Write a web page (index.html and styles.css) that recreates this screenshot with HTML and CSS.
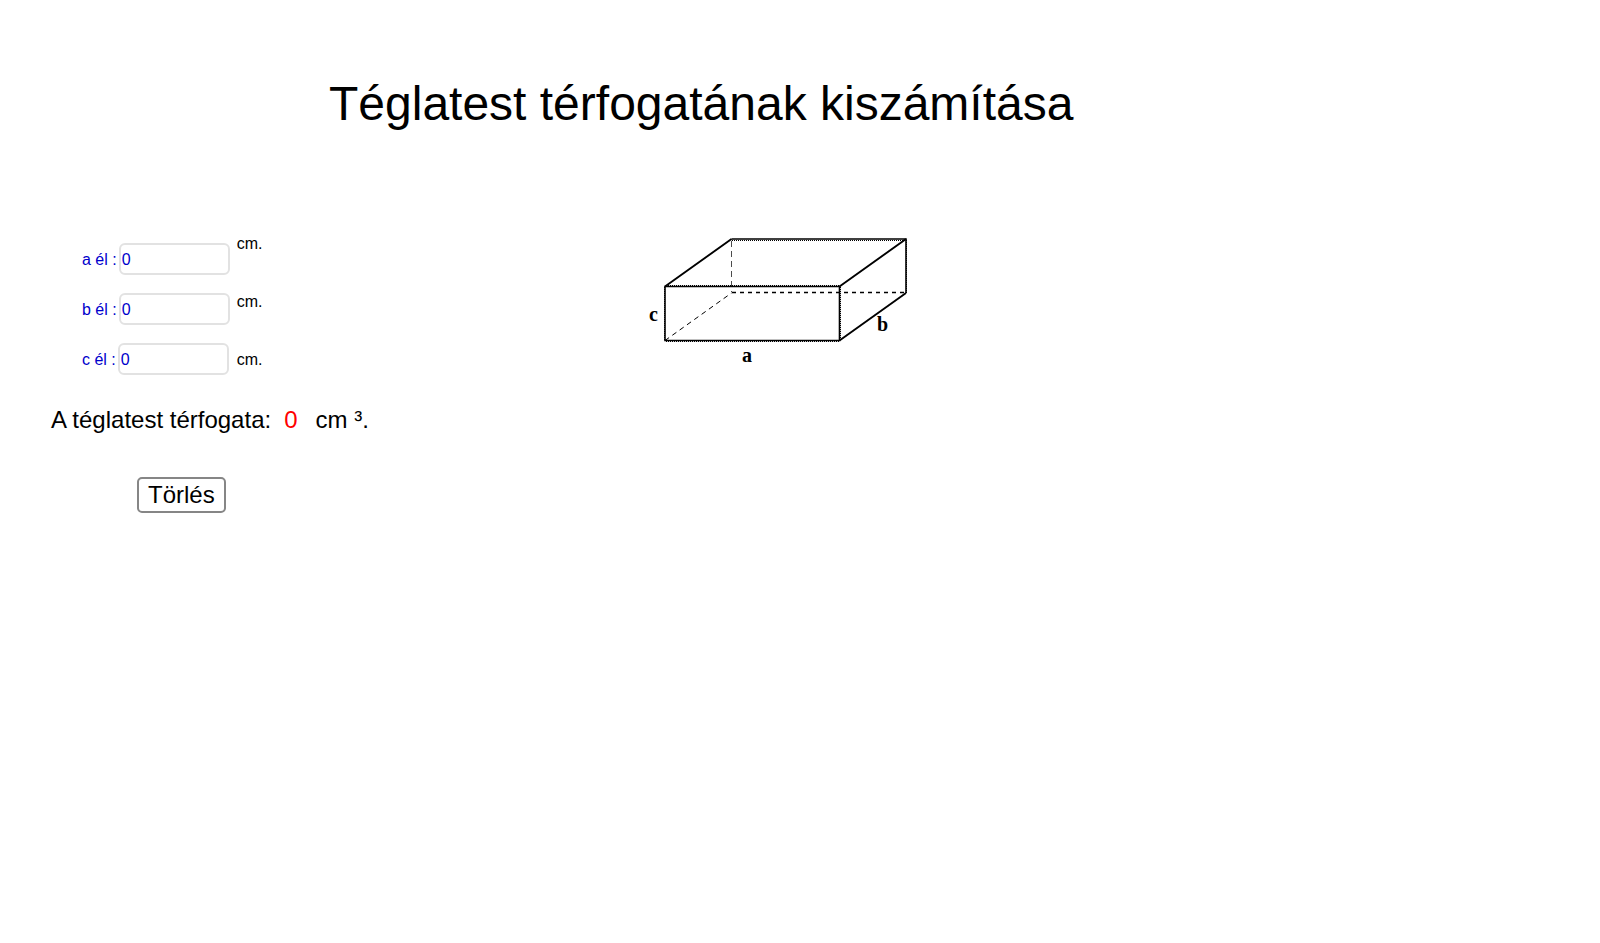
FILE: index.html
```html
<!DOCTYPE html>
<html lang="hu">
<head>
    <meta charset="UTF-8">
    <meta name="viewport" content="width=device-width, initial-scale=1.0">
    <title>Téglatest térfogatának kiszámítása</title>
    <link rel="stylesheet" href="styles.css">
</head>
<body>
    <h1>Téglatest térfogatának kiszámítása</h1>

    <main class="content">
        <div class="calculator">
            <!-- Edge inputs -->
            <div class="edges">
                <div class="fields">
                    <div class="field">
                        <label for="edgeA">a él :</label>
                        <input type="text" id="edgeA" class="edge" value="0">
                    </div>
                    <div class="field">
                        <label for="edgeB">b él :</label>
                        <input type="text" id="edgeB" class="edge" value="0">
                    </div>
                    <div class="field">
                        <label for="edgeC">c él :</label>
                        <input type="text" id="edgeC" class="edge" value="0">
                    </div>
                </div>
                <div class="units">
                    <span>cm.</span>
                    <span>cm.</span>
                    <span>cm.</span>
                </div>
            </div>

            <!-- Result -->
            <p class="result">
                <span>A téglatest térfogata:</span>
                <span id="volume">0</span>
                <span>cm ³.</span>
            </p>

            <button type="button" onclick="clearEdges()">Törlés</button>
        </div>

        <!-- Cuboid drawing -->
        <svg class="cuboid" viewBox="0 0 280 140" role="img" aria-label="Téglatest">
            <g class="solid">
                <path d="M25 56.5H199.5V110.5H25Z"/>
                <path d="M91.5 9H266V63"/>
            </g>
            <g class="slanted">
                <path d="M25 56.5L91.5 9M199.5 56.5L266 9M199.5 110.5L266 63"/>
            </g>
            <g class="halo">
                <path d="M92 10.5H266M26 55.5H199M26 111.5H199"/>
                <path d="M24.5 57V111M200.5 57V110M266.5 10V63"/>
            </g>
            <path class="hidden-thin" d="M91.5 11V62"/>
            <path class="hidden-diagonal" d="M25 110.5L91.5 63"/>
            <path class="hidden-edge" d="M92 62.5H266"/>
            <text x="9" y="91">c</text>
            <text x="102" y="132">a</text>
            <text x="237" y="101">b</text>
        </svg>
    </main>

    <script>
        const edges = document.querySelectorAll('.edge');
        const volume = document.getElementById('volume');

        function updateVolume() {
            let result = 1;
            edges.forEach(input => {
                result *= parseFloat(input.value.replace(',', '.')) || 0;
            });
            volume.textContent = Math.round(result * 100) / 100;
        }

        function clearEdges() {
            edges.forEach(input => input.value = '0');
            updateVolume();
        }

        edges.forEach(input => input.addEventListener('input', updateVolume));
    </script>
</body>
</html>
```
FILE: styles.css
```css
body {
    margin: 0;
    background-color: white;
    color: black;
    font-family: "Liberation Sans", Arial, sans-serif;
    font-size: 16px;
}

h1 {
    margin: 76px 0 0 329px;
    font-size: 48px;
    font-weight: normal;
    line-height: 56px;
}

.content {
    display: flex;
    align-items: flex-start;
    margin-top: 98px;
    padding-left: 51px;
}

.calculator {
    width: 589px;
    padding-top: 5px;
}

/* Edge inputs */
.edges {
    display: flex;
    gap: 7px;
    margin-left: 31px;
}
.fields {
    display: grid;
    gap: 18px;
    padding-top: 8px;
}
.field {
    display: flex;
    align-items: center;
    gap: 2px;
    color: #0000cc;
}
.field label {
    padding-top: 2px;
}
.edge {
    box-sizing: border-box;
    width: 111px;
    height: 32px;
    padding: 2px 1px 0;
    border: 2px solid #e2e2e2;
    border-radius: 6px;
    background-color: white;
    color: #0000cc;
    font-family: inherit;
    font-size: 16px;
}
.units {
    display: flex;
    flex-direction: column;
    gap: 40px;
    line-height: 18px;
}

/* Result */
.result {
    display: flex;
    margin: 31px 0 0;
    font-size: 24px;
    line-height: 28px;
}
#volume {
    margin: 0 18px 0 13px;
    color: red;
}

button {
    box-sizing: border-box;
    height: 36px;
    margin: 43px 0 0 86px;
    padding: 0 9px;
    border: 2px solid #868686;
    border-radius: 5px;
    background-color: white;
    color: black;
    font-family: inherit;
    font-size: 24px;
    line-height: 28px;
}

/* Cuboid drawing */
.cuboid {
    width: 280px;
    height: 140px;
    fill: none;
    stroke: black;
}
.solid {
    stroke-width: 1.6;
}
.slanted {
    stroke-width: 1.9;
}
.halo {
    stroke-width: 1;
    stroke-dasharray: 1 1;
}
.hidden-thin {
    stroke-width: 1;
    stroke-dasharray: 6 4;
    opacity: 0.7;
}
.hidden-diagonal {
    stroke-dasharray: 5 4;
}
.hidden-edge {
    stroke-width: 1.4;
    stroke-dasharray: 4 4;
}
.cuboid text {
    fill: black;
    stroke: none;
    font-family: "Liberation Serif", "Times New Roman", serif;
    font-size: 20px;
    font-weight: bold;
}
```
